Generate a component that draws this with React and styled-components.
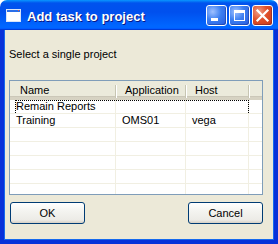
import React from 'react';
import styled, { createGlobalStyle } from 'styled-components';

const GlobalStyle = createGlobalStyle`
  html, body {
    margin: 0;
    padding: 0;
    background: #ffffff;
  }
  body {
    font-family: "Liberation Sans", Arial, sans-serif;
    font-size: 11px;
    color: #000;
  }
`;

const Window = styled.div`
  width: 278px;
  height: 244px;
  display: flex;
  flex-direction: column;
  overflow: hidden;
`;

const TitleBar = styled.div`
  height: 30px;
  flex: none;
  display: flex;
  align-items: center;
  padding: 0 5px 0 6px;
  border-radius: 7px 7px 0 0;
  background: linear-gradient(
    to bottom,
    #0997ff 0%,
    #0053ee 10%,
    #0050ee 40%,
    #0066ff 86%,
    #0066ff 92%,
    #005bff 95%,
    #003dd7 97%,
    #003dd7 100%
  );
`;

const TitleIcon = styled.svg`
  width: 15px;
  height: 13px;
  flex: none;
  margin-top: 1px;
`;

const Title = styled.div`
  flex: 1;
  margin-left: 6px;
  padding-top: 3px;
  color: #fff;
  font-family: "Liberation Sans", Arial, sans-serif;
  font-weight: bold;
  font-size: 13px;
  text-shadow: 1px 1px 0 #0a1883;
  white-space: nowrap;
`;

const Controls = styled.div`
  display: flex;
  gap: 2px;
`;

const CtlButton = styled.div`
  width: 21px;
  height: 21px;
  box-sizing: border-box;
  border: 1px solid #fff;
  border-radius: 3px;
  display: flex;
  align-items: center;
  justify-content: center;
  background: ${p => p.$close
    ? 'radial-gradient(circle at 30% 30%, #f0a08a 0%, #e0502a 45%, #c8391a 100%)'
    : 'radial-gradient(circle at 30% 30%, #9ec0ff 0%, #3c7ff1 45%, #2659de 100%)'};
  box-shadow: inset -1px -1px 0 rgba(0, 0, 60, 0.25);
`;

const Body = styled.div`
  flex: 1;
  background: #ece9d8;
  border: 4px solid #0831d9;
  border-top: none;
  box-shadow: inset 1px 0 0 #166aee, inset -1px 0 0 #166aee, inset 0 -1px 0 #166aee;
  padding: 18px 11px 0 5px;
  display: flex;
  flex-direction: column;
`;

const Prompt = styled.div`
  line-height: 13px;
  height: 13px;
`;

const ListBox = styled.div`
  margin-top: 19px;
  height: 113px;
  border: 1px solid #7f9db9;
  background: #fff;
  overflow: hidden;
`;

const COLS = '106px 70px 63px 1fr';

const HeaderRow = styled.div`
  display: grid;
  grid-template-columns: ${COLS};
  height: 16px;
  background: #ebeadb;
  border-bottom: 3px solid #d6d2c2;
  box-shadow: inset 0 -1px 0 #cbc7b8;
`;

const HeaderCell = styled.div`
  position: relative;
  line-height: 18px;
  padding-left: ${p => p.$pad}px;
  white-space: nowrap;
  &::after {
    content: '';
    display: ${p => (p.$sep ? 'block' : 'none')};
    position: absolute;
    right: 0;
    top: 4px;
    bottom: 1px;
    width: 1px;
    background: #c7c5b2;
    box-shadow: 1px 0 0 #fff;
  }
`;

const Row = styled.div`
  position: relative;
  display: grid;
  grid-template-columns: ${COLS};
  height: 14px;
  &::after {
    content: '';
    display: ${p => (p.$focus ? 'block' : 'none')};
    position: absolute;
    left: 5px;
    top: 0;
    width: 234px;
    height: 13px;
    box-sizing: border-box;
    border: 1px dotted #000;
    border-bottom: none;
  }
`;

const Cell = styled.div`
  box-sizing: border-box;
  line-height: 13px;
  padding-left: ${p => p.$pad}px;
  border-bottom: 1px solid #f1efe2;
  border-right: ${p => (p.$last ? 'none' : '1px solid #f1efe2')};
  white-space: nowrap;
  overflow: hidden;
`;

const ButtonBar = styled.div`
  display: flex;
  justify-content: space-between;
  margin-top: 7px;
  padding-left: 1px;
`;

const PushButton = styled.button`
  width: 75px;
  height: 22px;
  border: 1px solid #003c74;
  border-radius: 3px;
  background: linear-gradient(to bottom, #ffffff 0%, #f4f4f0 40%, #ecebe6 85%, #d6d0c5 100%);
  font-family: "Liberation Sans", Arial, sans-serif;
  font-size: 11px;
  color: #000;
  padding: 0;
`;

const rows = [
  { name: 'Remain Reports', app: '', host: '', focus: true },
  { name: 'Training', app: 'OMS01', host: 'vega' },
  {}, {}, {}, {}, {}, {},
];

export default function App() {
  return (
    <Window>
      <GlobalStyle />
      <TitleBar>
        <TitleIcon viewBox="0 0 15 13">
          <rect x="0.5" y="0.5" width="14" height="12" fill="#fff" stroke="#d8e4f8" />
          <rect x="1" y="1" width="13" height="2" fill="#2a6ee8" />
          <rect x="12" y="1" width="1" height="1" fill="#e85a3a" />
        </TitleIcon>
        <Title>Add task to project</Title>
        <Controls>
          <CtlButton>
            <svg width="19" height="19" viewBox="0 0 19 19">
              <rect x="4" y="12" width="7" height="3" fill="#fff" />
            </svg>
          </CtlButton>
          <CtlButton>
            <svg width="19" height="19" viewBox="0 0 19 19">
              <rect x="4.5" y="4.5" width="10" height="10" fill="none" stroke="#fff" />
              <rect x="4" y="4" width="11" height="3" fill="#fff" />
            </svg>
          </CtlButton>
          <CtlButton $close>
            <svg width="19" height="19" viewBox="0 0 19 19">
              <path d="M4.5 4.5 L14.5 14.5 M14.5 4.5 L4.5 14.5" stroke="#fff" strokeWidth="2.2" strokeLinecap="square" />
            </svg>
          </CtlButton>
        </Controls>
      </TitleBar>
      <Body>
        <Prompt>Select a single project</Prompt>
        <ListBox>
          <HeaderRow>
            <HeaderCell $pad={10} $sep>Name</HeaderCell>
            <HeaderCell $pad={9} $sep>Application</HeaderCell>
            <HeaderCell $pad={9} $sep>Host</HeaderCell>
            <HeaderCell />
          </HeaderRow>
          {rows.map((r, i) => (
            <Row key={i} $focus={r.focus}>
              <Cell $pad={6}>{r.name}</Cell>
              <Cell $pad={6}>{r.app}</Cell>
              <Cell $pad={6}>{r.host}</Cell>
              <Cell $last />
            </Row>
          ))}
        </ListBox>
        <ButtonBar>
          <PushButton>OK</PushButton>
          <PushButton>Cancel</PushButton>
        </ButtonBar>
      </Body>
    </Window>
  );
}
